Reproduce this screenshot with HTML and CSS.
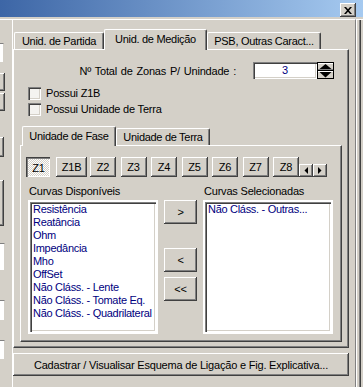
FILE: index.html
```html
<!DOCTYPE html>
<html lang="pt">
<head>
  <meta charset="UTF-8">
  <title>Unid. de Medição</title>
  <link rel="stylesheet" href="styles.css">
</head>
<body>
  <div class="titlebar">
    <span class="close-btn">
      <svg width="8" height="7" viewBox="0 0 8 7">
        <path d="M0 0h2l2 2.2L6 0h2L5 3.5 8 7H6L4 4.8 2 7H0l3-3.5z" fill="#000"/>
      </svg>
    </span>
  </div>

  <div class="client">
    <!-- bordas dos controles da janela ao lado -->
    <div class="side-strip">
      <span class="strip-edit s1"></span>
      <span class="strip-btn s2"></span>
      <span class="strip-btn s3"></span>
      <span class="strip-btn s4"></span>
      <span class="strip-btn s5"></span>
      <span class="strip-edit s6"></span>
      <span class="strip-edit s7"></span>
      <span class="strip-edit s8"></span>
    </div>

    <div class="frame">
      <div class="tab-control">
        <div class="tab-row">
          <div class="tab tab-partida">Unid. de Partida</div>
          <div class="tab tab-medicao active">Unid. de Medição</div>
          <div class="tab tab-psb">PSB, Outras Caract...</div>
        </div>

        <div class="tab-panel">
          <div class="zones-row">
            <span class="zones-label">Nº Total de Zonas P/ Unindade :</span>
            <div class="spin">
              <div class="spin-field">3</div>
              <svg class="spin-btns" width="17" height="17" viewBox="0 0 17 17">
                <rect x="0.5" y="0.5" width="16" height="16" fill="#d4d0c8" stroke="#000"/>
                <line x1="1" y1="1.5" x2="16" y2="1.5" stroke="#fff"/>
                <line x1="1" y1="7.5" x2="16" y2="7.5" stroke="#808080"/>
                <line x1="1" y1="8.5" x2="16" y2="8.5" stroke="#000"/>
                <line x1="1" y1="9.5" x2="16" y2="9.5" stroke="#fff"/>
                <polygon points="8.5,2 14.5,7 2.5,7" fill="#000"/>
                <polygon points="2.5,10 14.5,10 8.5,15.5" fill="#000"/>
              </svg>
            </div>
          </div>

          <div class="checks">
            <label class="check-row"><span class="check-box"></span>Possui Z1B</label>
            <label class="check-row"><span class="check-box"></span>Possui Unidade de Terra</label>
          </div>

          <div class="tab-control inner">
            <div class="tab-row">
              <div class="tab tab-fase active">Unidade de Fase</div>
              <div class="tab tab-terra">Unidade de Terra</div>
            </div>

            <div class="tab-panel">
              <div class="zone-btns">
                <span class="btn zone pressed z1">Z1</span>
                <span class="btn zone wide">Z1B</span>
                <span class="btn zone">Z2</span>
                <span class="btn zone">Z3</span>
                <span class="btn zone">Z4</span>
                <span class="btn zone">Z5</span>
                <span class="btn zone">Z6</span>
                <span class="btn zone">Z7</span>
                <span class="btn zone">Z8</span>
                <span class="scroll-arrows">
                  <span class="btn arrow">
                    <svg width="4" height="7" viewBox="0 0 4 7"><polygon points="4,0 4,7 0.5,3.5" fill="#000"/></svg>
                  </span>
                  <span class="btn arrow">
                    <svg width="4" height="7" viewBox="0 0 4 7"><polygon points="0,0 0,7 3.5,3.5" fill="#000"/></svg>
                  </span>
                </span>
              </div>

              <div class="curves">
                <div class="curves-label">Curvas Disponíveis</div>
                <div></div>
                <div class="curves-label">Curvas Selecionadas</div>

                <ul class="listbox" id="availableList"></ul>
                <div class="move-btns">
                  <span class="btn move">&gt;</span>
                  <span class="btn move gap-top">&lt;</span>
                  <span class="btn move">&lt;&lt;</span>
                </div>
                <ul class="listbox" id="selectedList"></ul>
              </div>
            </div>
          </div>
        </div>
      </div>

      <div class="btn cmd-btn">Cadastrar / Visualisar Esquema de Ligação e Fig. Explicativa...</div>
    </div>

    <div class="right-strip"></div>
  </div>

  <script>
    // curvas disponíveis e selecionadas
    const available = [
      'Resistência', 'Reatância', 'Ohm', 'Impedância', 'Mho', 'OffSet',
      'Não Cláss. - Lente', 'Não Cláss. - Tomate Eq.', 'Não Cláss. - Quadrilateral'
    ];
    const selected = ['Não Cláss. - Outras...'];

    function fillList(id, items) {
      const list = document.getElementById(id);
      items.forEach(text => {
        const li = document.createElement('li');
        li.textContent = text;
        list.appendChild(li);
      });
    }

    fillList('availableList', available);
    fillList('selectedList', selected);
  </script>
</body>
</html>
```

FILE: styles.css
```css
:root {
  --face: #d4d0c8;
  --light: #ffffff;
  --shadow: #808080;
  --dark: #404040;
  --navy: #000080;
}

html, body {
  margin: 0;
  padding: 0;
}

body {
  width: 363px;
  height: 387px;
  overflow: hidden;
  background-color: var(--face);
  font-family: 'Liberation Sans', Arial, sans-serif;
  font-size: 11px;
  letter-spacing: -0.2px;
  color: #000;
}

/* barra de título */
.titlebar {
  height: 17px;
  background: linear-gradient(to right, #3d66a6, #a6caf0);
  display: flex;
  justify-content: flex-end;
  align-items: flex-start;
  padding-right: 7px;
  box-sizing: border-box;
}

.close-btn {
  margin-top: 3px;
  width: 16px;
  height: 14px;
  display: flex;
  align-items: center;
  justify-content: center;
  background-color: var(--face);
  box-shadow: inset -1px -1px var(--dark), inset 1px 1px var(--light), inset -2px -2px var(--shadow);
}

.client {
  display: flex;
  height: 370px;
}

/* restos da janela ao lado */
.side-strip {
  width: 12px;
  margin-top: 2px;
  border-top: 1px solid var(--light);
  display: flex;
  flex-direction: column;
}

.strip-edit {
  width: 3px;
  background-color: var(--light);
  border-top: 1px solid var(--shadow);
  border-right: 1px solid var(--face);
}

.strip-btn {
  background-color: var(--face);
  box-shadow: inset -1px -1px var(--dark), inset 0 1px var(--light), inset -2px -2px var(--shadow);
}

.s1 { margin-top: 23px; height: 18px; }
.s2 { margin-top: 11px; height: 18px; width: 5px; }
.s3 { margin-top: 2px; height: 18px; width: 5px; }
.s4 { margin-top: 26px; height: 20px; width: 4px; }
.s5 { margin-top: 23px; height: 46px; width: 4px; }
.s6 { margin-top: 17px; height: 26px; width: 4px; }
.s7 { margin-top: 30px; height: 19px; width: 4px; }
.s8 { margin-top: 20px; height: 18px; width: 4px; }

.frame {
  width: 344px;
  margin-top: 2px;
  box-sizing: border-box;
  border-top: 1px solid var(--light);
  border-left: 1px solid var(--light);
  border-right: 1px solid var(--shadow);
  padding-top: 9px;
}

.right-strip {
  width: 7px;
  margin-top: 2px;
  border-top: 1px solid var(--light);
  box-shadow: inset 1px 0 var(--light), inset -2px 0 var(--face), inset -3px 0 var(--dark), inset -4px 0 var(--shadow);
}

/* abas */
.tab-control {
  width: 336px;
}

.tab-row {
  height: 20px;
  display: flex;
  align-items: flex-end;
  padding-left: 1px;
}

.tab {
  height: 17px;
  box-sizing: border-box;
  display: flex;
  align-items: center;
  justify-content: center;
  border-top: 1px solid var(--light);
  border-left: 1px solid var(--light);
  border-right: 1px solid var(--dark);
  border-radius: 2px 2px 0 0;
  box-shadow: inset -1px 0 var(--shadow);
  white-space: nowrap;
  padding-bottom: 1px;
  letter-spacing: -0.3px;
}

.tab.active {
  height: 21px;
  margin-bottom: -1px;
  position: relative;
  z-index: 1;
  background-color: var(--face);
  padding-bottom: 3px;
}

.tab-partida { width: 90px; }
.tab-medicao { width: 103px; }
.tab-psb { width: 114px; }

.tab-panel {
  border: 1px solid;
  border-color: var(--light) var(--dark) var(--dark) var(--light);
  box-shadow: inset -1px -1px var(--shadow);
  padding-bottom: 5px;
}

.zones-row {
  margin-top: 12px;
  display: flex;
  justify-content: flex-end;
  align-items: center;
  padding-right: 14px;
}

.zones-label {
  margin-right: 17px;
  word-spacing: 1px;
}

.spin {
  display: flex;
}

.spin-field {
  width: 64px;
  height: 17px;
  box-sizing: border-box;
  background-color: var(--light);
  box-shadow: inset 1px 1px var(--shadow), inset 2px 2px var(--dark), inset -1px -1px var(--light), inset -2px -2px var(--face);
  color: var(--navy);
  text-align: center;
  line-height: 17px;
}

.spin-btns {
  display: block;
}

.checks {
  margin-top: 6px;
  padding-left: 14px;
}

.check-row {
  height: 16px;
  display: flex;
  align-items: center;
}

.check-box {
  width: 13px;
  height: 13px;
  box-sizing: border-box;
  margin-right: 5px;
  background-color: #f4f3f0;
  box-shadow: inset 1px 1px var(--shadow), inset 2px 2px var(--dark), inset -1px -1px var(--light), inset -2px -2px var(--face);
}

/* abas internas */
.tab-control.inner {
  width: 322px;
  margin: 9px 0 0 6px;
}

.inner .tab-row {
  height: 19px;
  padding-left: 2px;
}

.inner .tab {
  width: 94px;
}

.inner .tab.active {
  height: 20px;
  padding-bottom: 2px;
}

.inner .tab-panel {
  padding: 11px 0 7px 5px;
}

/* botões */
.btn {
  display: flex;
  align-items: center;
  justify-content: center;
  box-sizing: border-box;
  background-color: var(--face);
  box-shadow: inset -1px -1px var(--dark), inset 1px 1px var(--light), inset -2px -2px var(--shadow);
  white-space: nowrap;
}

.zone-btns {
  display: flex;
  align-items: flex-end;
  height: 20px;
}

.zone {
  width: 26px;
  height: 20px;
  margin-right: 4.5px;
}

.zone.z1 {
  width: 24px;
  margin-right: 6px;
}

.zone.wide {
  width: 31px;
  margin-right: 3px;
}

.zone.pressed {
  background: repeating-conic-gradient(#ffffff 0 25%, #d4d0c8 0 50%) 0 0 / 2px 2px;
  box-shadow: inset 1px 1px var(--dark), inset 2px 2px var(--shadow), inset -1px -1px var(--light);
  padding: 2px 0 0 1px;
}

.scroll-arrows {
  display: flex;
  margin-left: -4.5px;
}

.arrow {
  width: 14px;
  height: 13px;
}

.curves {
  margin: 8px 0 0 2px;
  display: grid;
  grid-template-columns: 130px 33px 130px;
  grid-template-rows: 13px 134px;
  column-gap: 6px;
  row-gap: 2px;
}

.curves-label {
  line-height: 13px;
  padding-left: 1px;
}

.listbox {
  margin: 0;
  padding: 1px 0 0 3px;
  list-style: none;
  background-color: var(--light);
  box-shadow: inset 1px 1px var(--shadow), inset 2px 2px var(--dark), inset -1px -1px var(--light), inset -2px -2px var(--face);
  color: var(--navy);
  line-height: 13px;
  letter-spacing: -0.3px;
  border: 2px solid transparent;
  overflow: hidden;
}

.move-btns {
  display: flex;
  flex-direction: column;
}

.move {
  height: 24px;
  margin-bottom: 5px;
}

.move.gap-top {
  margin-top: 19px;
}

.cmd-btn {
  width: 336px;
  height: 23px;
  margin-top: 5px;
}
```
